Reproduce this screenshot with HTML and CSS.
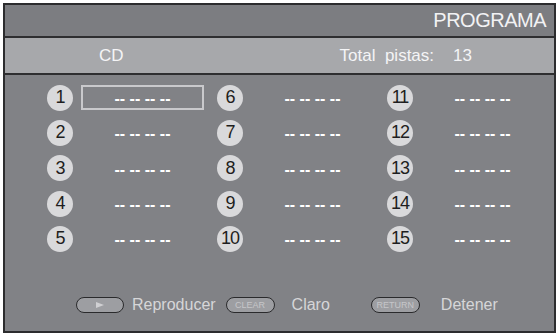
FILE: index.html
```html
<!DOCTYPE html>
<html lang="es">
<head>
    <meta charset="UTF-8">
    <meta name="viewport" content="width=device-width, initial-scale=1.0">
    <title>Programa</title>
    <link rel="stylesheet" href="styles.css">
</head>
<body>
    <div class="screen">
        <header class="title-bar">PROGRAMA</header>
        <div class="info-bar">
            <span class="disc">CD</span>
            <span class="total">Total&nbsp; pistas:</span>
            <span class="count">13</span>
        </div>

        <div class="tracks">
            <div class="column">
                <div class="slot"><span class="num">1</span><span class="time selected">-- -- -- --</span></div>
                <div class="slot"><span class="num">2</span><span class="time">-- -- -- --</span></div>
                <div class="slot"><span class="num">3</span><span class="time">-- -- -- --</span></div>
                <div class="slot"><span class="num">4</span><span class="time">-- -- -- --</span></div>
                <div class="slot"><span class="num">5</span><span class="time">-- -- -- --</span></div>
            </div>
            <div class="column">
                <div class="slot"><span class="num">6</span><span class="time">-- -- -- --</span></div>
                <div class="slot"><span class="num">7</span><span class="time">-- -- -- --</span></div>
                <div class="slot"><span class="num">8</span><span class="time">-- -- -- --</span></div>
                <div class="slot"><span class="num">9</span><span class="time">-- -- -- --</span></div>
                <div class="slot"><span class="num">10</span><span class="time">-- -- -- --</span></div>
            </div>
            <div class="column">
                <div class="slot"><span class="num">11</span><span class="time">-- -- -- --</span></div>
                <div class="slot"><span class="num">12</span><span class="time">-- -- -- --</span></div>
                <div class="slot"><span class="num">13</span><span class="time">-- -- -- --</span></div>
                <div class="slot"><span class="num">14</span><span class="time">-- -- -- --</span></div>
                <div class="slot"><span class="num">15</span><span class="time">-- -- -- --</span></div>
            </div>
        </div>

        <footer class="keys">
            <span class="key key-play"><span class="arrow"></span></span>
            <span class="label label-play">Reproducer</span>
            <span class="key key-clear">CLEAR</span>
            <span class="label label-clear">Claro</span>
            <span class="key key-return">RETURN</span>
            <span class="label">Detener</span>
        </footer>
    </div>
</body>
</html>
```

FILE: styles.css
```css
body {
    margin: 0;
    background-color: #ffffff;
    font-family: 'Liberation Sans', Arial, sans-serif;
}
.screen {
    width: 549px;
    height: 326px;
    margin: 3px 0 0 3px;
    border: 2px solid #2c2c2e;
    background-color: #818286;
    display: flex;
    flex-direction: column;
}
.title-bar {
    height: 31px;
    background-color: #7c7d81;
    border-bottom: 2px solid #2e2e30;
    color: #f2f2f4;
    font-size: 20px;
    letter-spacing: -0.5px;
    text-align: right;
    padding-right: 8px;
    line-height: 30px;
}
.info-bar {
    height: 35px;
    background-color: #a7a8ab;
    border-bottom: 2px solid #2e2e30;
    color: #f4f4f6;
    font-size: 17px;
    display: flex;
    align-items: center;
}
.disc {
    margin-left: 94px;
}
.total {
    margin-left: 216px;
}
.count {
    margin-left: 19px;
}
.tracks {
    flex: 1;
    display: flex;
    gap: 13px;
    padding: 5px 0 0 42px;
}
.column {
    display: flex;
    flex-direction: column;
}
.slot {
    height: 35.3px;
    display: flex;
    align-items: center;
    gap: 8px;
}
.num {
    width: 26px;
    height: 26px;
    border-radius: 50%;
    background-color: #d9d9db;
    color: #1e1e20;
    font-size: 18px;
    letter-spacing: -1px;
    display: flex;
    align-items: center;
    justify-content: center;
}
.time {
    width: 123px;
    height: 25px;
    box-sizing: border-box;
    color: #ffffff;
    font-size: 16px;
    font-weight: bold;
    text-align: center;
    line-height: 23px;
    border: 2px solid transparent;
}
.time.selected {
    border-color: #c9c9cc;
}
.keys {
    height: 51px;
    display: flex;
    align-items: flex-start;
    padding-left: 71px;
    color: #d6d6d8;
    font-size: 16px;
}
.key {
    height: 16px;
    box-sizing: border-box;
    margin-top: 17px;
    border: 1.5px solid #2a2a2c;
    border-radius: 8px;
    background-color: #9d9ea2;
    color: #c6c6c9;
    font-size: 9px;
    display: flex;
    align-items: center;
    justify-content: center;
}
.key-play {
    width: 48px;
}
.arrow {
    width: 0;
    height: 0;
    border-top: 3.5px solid transparent;
    border-bottom: 3.5px solid transparent;
    border-left: 8px solid #d0d0d3;
}
.key-clear {
    width: 49px;
    margin-left: 10px;
}
.key-return {
    width: 49px;
    margin-left: 41px;
}
.label {
    margin-top: 15px;
    margin-left: 8px;
    line-height: 19px;
}
.label-clear {
    margin-left: 17px;
}
.key-return + .label {
    margin-left: 21px;
}
```
